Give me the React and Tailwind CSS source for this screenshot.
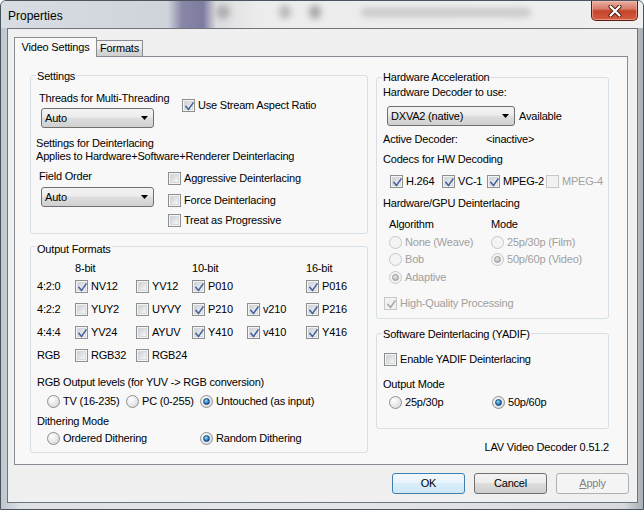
import React from 'react';

const T = "text-[11px] leading-[13px] tracking-[-0.2px]";

const Check = ({ checked, disabled }) => (
  <span
    className={`relative inline-flex h-[13px] w-[13px] shrink-0 items-center justify-center border ${
      disabled ? 'border-[#c5c8cb] bg-[#f4f4f4]' : 'border-[#8e8f8f] bg-[#f4f4f4]'
    }`}
  >
    <span
      className={`h-[9px] w-[9px] ${
        disabled ? 'bg-[#f1f1f1]' : 'bg-gradient-to-br from-[#cdd1d6] to-[#f7f7f7] border border-[#d6d9dc]'
      }`}
    />
    {checked && (
      <svg className="absolute left-[1px] top-[1px]" width="11" height="11" viewBox="0 0 11 11">
        <path
          d="M2 5.5 L4.5 8.5 L9 2"
          fill="none"
          stroke={disabled ? '#a8a8a8' : '#4a63a0'}
          strokeWidth="1.6"
          strokeLinecap="square"
        />
      </svg>
    )}
  </span>
);

const Radio = ({ checked, disabled }) => (
  <span
    className={`inline-flex h-[13px] w-[13px] shrink-0 items-center justify-center rounded-full border ${
      disabled
        ? 'border-[#c5c8cb] bg-[#f4f4f4]'
        : 'border-[#8e8f8f] bg-[radial-gradient(circle_at_35%_30%,#ffffff,#d0d3d7)]'
    }`}
  >
    {checked &&
      (disabled ? (
        <span className="h-[7px] w-[7px] rounded-full border border-[#9a9a9a] bg-[radial-gradient(circle_at_40%_35%,#e8e8e8,#a8a8a8)]" />
      ) : (
        <span className="h-[7px] w-[7px] rounded-full border border-[#1b4a78] bg-[radial-gradient(circle_at_40%_35%,#a6e2fa,#2a7cc0_55%,#0f3a66)]" />
      ))}
  </span>
);

const CheckRow = ({ checked, disabled, label, className = '' }) => (
  <div className={`flex items-center gap-[3px] ${className}`}>
    <Check checked={checked} disabled={disabled} />
    <span className={disabled ? 'text-[#a0a0a0]' : ''}>{label}</span>
  </div>
);

const RadioRow = ({ checked, disabled, label, className = '' }) => (
  <div className={`flex items-center gap-[3px] ${className}`}>
    <Radio checked={checked} disabled={disabled} />
    <span className={disabled ? 'text-[#a0a0a0]' : ''}>{label}</span>
  </div>
);

const Select = ({ value, className = '' }) => (
  <div
    className={`flex h-[20px] items-center justify-between rounded-[3px] border border-[#707070] bg-[linear-gradient(#f3f3f3,#ececec_45%,#dedede_50%,#d0d0d0)] pl-[3px] pr-[5px] ${className}`}
  >
    <span>{value}</span>
    <svg width="7" height="4" viewBox="0 0 7 4">
      <path d="M0 0 H7 L3.5 4 Z" fill="#000" />
    </svg>
  </div>
);

const Group = ({ label, className = '', labelTop = 'top-[-6px]', children }) => (
  <div className={`relative rounded-[3px] border border-[#d5dfe5] ${className}`}>
    <span className={`absolute left-[5px] bg-[#f8f8f8] px-[1px] ${labelTop}`}>{label}</span>
    {children}
  </div>
);

const formatRows = [
  ['4:2:0', ['NV12', true], ['YV12', false], ['P010', true], null, ['P016', true]],
  ['4:2:2', ['YUY2', false], ['UYVY', false], ['P210', true], ['v210', true], ['P216', true]],
  ['4:4:4', ['YV24', true], ['AYUV', false], ['Y410', true], ['v410', true], ['Y416', true]],
  ['RGB', ['RGB32', false], ['RGB24', false], null, null, null],
];

const Button = ({ children, kind }) => {
  const styles = {
    def: 'border-[#3c7fb1] bg-[linear-gradient(#f2f9fd,#e7f3fb_50%,#d8edf9_50%,#cfe7f6)] text-black',
    normal: 'border-[#707070] bg-[linear-gradient(#f3f3f3,#ececec_50%,#dddddd_50%,#cfcfcf)] text-black',
    disabled: 'border-[#adb2b5] bg-[#f4f4f4] text-[#838383]',
  };
  return (
    <div className={`flex h-[21px] w-[73px] items-center justify-center rounded-[3px] border ${styles[kind]}`}>
      {children}
    </div>
  );
};

export default function App() {
  return (
    <div
      className={`flex h-[510px] w-[644px] flex-col overflow-hidden rounded-t-[6px] border border-[#4b5560] bg-[linear-gradient(90deg,#bfc5cd,#dde1e6_3%,#e4e6ea_50%,#d6d9dd_97%,#a9afb6)] font-['Liberation_Sans',Arial,sans-serif] text-black ${T}`}
    >
      {/* title bar */}
      <div className="relative flex h-[27px] shrink-0 justify-between bg-[linear-gradient(90deg,#d8dde3_0%,#cfd3da_26%,#8887a8_28.2%,#7d7ca0_31.5%,#dcdcdf_33.5%,#ececec_40%,#efefef_100%)]">
        <span className="pointer-events-none absolute left-[215px] top-[4px] h-[14px] w-[14px] rounded-full bg-[#8e8e8e] opacity-60 blur-[3px]" />
        <span className="pointer-events-none absolute left-[278px] top-[4px] h-[14px] w-[12px] rounded-full bg-[#9a9a9a] opacity-60 blur-[3px]" />
        <span className="pointer-events-none absolute left-[308px] top-[4px] h-[14px] w-[12px] rounded-full bg-[#7c7c7c] opacity-60 blur-[3px]" />
        <span className="pointer-events-none absolute left-[360px] top-[7px] h-[9px] w-[170px] rounded-full bg-[#a5a5a5] opacity-50 blur-[3px]" />
        <span className="relative pl-[7px] pt-[8px] text-[12px] leading-[14px] tracking-normal">Properties</span>
        <div className="relative mr-[5px] flex h-[20px] w-[47px] items-center justify-center rounded-b-[5px] border border-t-0 border-[#5a1c12] bg-[linear-gradient(#eab0a3,#d87a66_42%,#c4452c_52%,#d45d40)] shadow-[inset_0_0_0_1px_rgba(255,200,190,0.5)]">
          <svg width="14" height="12" viewBox="0 0 14 12">
            <path d="M2.5 1.5 L11.5 10.5 M11.5 1.5 L2.5 10.5" stroke="#4a1a12" strokeWidth="4" strokeLinecap="round" />
            <path d="M2.5 1.5 L11.5 10.5 M11.5 1.5 L2.5 10.5" stroke="#ffffff" strokeWidth="2.2" strokeLinecap="round" />
          </svg>
        </div>
      </div>

      {/* client */}
      <div className="ml-[6px] h-[475px] w-[631px] border border-[#6e747b] bg-[#f0f0f0] pl-[6px] pt-[8px]">
        {/* tabs */}
        <div className="flex h-[19px] items-end">
          <div className="relative z-10 mb-[-1px] flex h-[20px] w-[83px] items-center justify-center border border-b-0 border-[#898c95] bg-[#f8f8f8] pb-[1px]">
            Video Settings
          </div>
          <div className="flex h-[16px] w-[46px] items-center justify-center border border-b-0 border-l-0 border-[#898c95] bg-[linear-gradient(#f2f2f2,#ebebeb_50%,#dddddd_50%,#cfcfcf)]">
            Formats
          </div>
        </div>

        {/* tab pane */}
        <div className="h-[409px] w-[614px] border border-[#898c95] bg-[#f8f8f8]">
          <div className="flex gap-[8px] pl-[15px] pt-[18px]">
            {/* left column */}
            <div className="w-[338px]">
              <Group label="Settings" className="h-[159px]">
                <div className="flex pl-[8px] pt-[16px]">
                  <div className="w-[143px]">
                    <div>Threads for Multi-Threading</div>
                    <Select value="Auto" className="ml-[2px] mt-[3px] w-[113px]" />
                  </div>
                  <CheckRow checked label="Use Stream Aspect Ratio" className="mt-[7px] h-[13px]" />
                </div>
                <div className="ml-[5px] mt-[9px]">Settings for Deinterlacing</div>
                <div className="ml-[5px]">Applies to Hardware+Software+Renderer Deinterlacing</div>
                <div className="mt-[7px] flex pl-[8px]">
                  <div className="w-[129px]">
                    <div>Field Order</div>
                    <Select value="Auto" className="ml-[2px] mt-[4px] w-[113px]" />
                  </div>
                  <div className="flex flex-col">
                    <CheckRow label="Aggressive Deinterlacing" className="mt-[2px]" />
                    <CheckRow label="Force Deinterlacing" className="mt-[9px]" />
                    <CheckRow label="Treat as Progressive" className="mt-[7px]" />
                  </div>
                </div>
              </Group>

              <Group label="Output Formats" labelTop="top-[-4px]" className="mt-[12px] h-[207px]">
                <div className="pl-[6px] pt-[15px]">
                  <div className="grid grid-cols-[38px_61px_56px_55px_59px_1fr]">
                    <span />
                    <span>8-bit</span>
                    <span />
                    <span>10-bit</span>
                    <span />
                    <span>16-bit</span>
                  </div>
                  {formatRows.map((row, i) => (
                    <div
                      key={row[0]}
                      className={`grid grid-cols-[38px_61px_56px_55px_59px_1fr] items-center ${i === 0 ? 'mt-[5px]' : 'mt-[10px]'}`}
                    >
                      <span>{row[0]}</span>
                      {row.slice(1).map((c, j) =>
                        c ? <CheckRow key={j} checked={c[1]} label={c[0]} /> : <span key={j} />
                      )}
                    </div>
                  ))}
                  <div className="mt-[14px]">RGB Output levels (for YUV -&gt; RGB conversion)</div>
                  <div className="mt-[6px] flex pl-[10px]">
                    <RadioRow label="TV (16-235)" className="w-[79px]" />
                    <RadioRow label="PC (0-255)" className="w-[74px]" />
                    <RadioRow checked label="Untouched (as input)" />
                  </div>
                  <div className="mt-[7px]">Dithering Mode</div>
                  <div className="mt-[4px] flex pl-[10px]">
                    <RadioRow label="Ordered Dithering" className="w-[153px]" />
                    <RadioRow checked label="Random Dithering" />
                  </div>
                </div>
              </Group>
            </div>

            {/* right column */}
            <div className="w-[233px] pt-[2px]">
              <Group label="Hardware Acceleration" labelTop="top-[-7px]" className="h-[242px]">
                <div className="ml-[6px] pt-[8px]">Hardware Decoder to use:</div>
                <div className="ml-[10px] mt-[7px] flex items-center gap-[4px]">
                  <Select value="DXVA2 (native)" className="w-[128px]" />
                  <span>Available</span>
                </div>
                <div className="ml-[6px] mt-[7px] flex">
                  <span className="w-[103px]">Active Decoder:</span>
                  <span>&lt;inactive&gt;</span>
                </div>
                <div className="ml-[6px] mt-[7px]">Codecs for HW Decoding</div>
                <div className="ml-[13px] mt-[9px] flex">
                  <CheckRow checked label="H.264" className="w-[52px]" />
                  <CheckRow checked label="VC-1" className="w-[45px]" />
                  <CheckRow checked label="MPEG-2" className="w-[59px]" />
                  <CheckRow disabled label="MPEG-4" />
                </div>
                <div className="ml-[6px] mt-[9px]">Hardware/GPU Deinterlacing</div>
                <div className="ml-[12px] mt-[8px] flex">
                  <div className="w-[102px]">
                    <div>Algorithm</div>
                    <RadioRow disabled label="None (Weave)" className="mt-[5px]" />
                    <RadioRow disabled label="Bob" className="mt-[4px]" />
                    <RadioRow disabled checked label="Adaptive" className="mt-[5px]" />
                  </div>
                  <div>
                    <div>Mode</div>
                    <RadioRow disabled label="25p/30p (Film)" className="mt-[5px]" />
                    <RadioRow disabled checked label="50p/60p (Video)" className="mt-[4px]" />
                  </div>
                </div>
                <CheckRow disabled checked label="High-Quality Processing" className="ml-[7px] mt-[13px]" />
              </Group>

              <Group label="Software Deinterlacing (YADIF)" className="mt-[14px] h-[96px]">
                <CheckRow label="Enable YADIF Deinterlacing" className="ml-[7px] pt-[19px]" />
                <div className="ml-[6px] mt-[12px]">Output Mode</div>
                <div className="ml-[12px] mt-[5px] flex">
                  <RadioRow label="25p/30p" className="w-[103px]" />
                  <RadioRow checked label="50p/60p" />
                </div>
              </Group>

              <div className="mt-[12px] text-right">LAV Video Decoder 0.51.2</div>
            </div>
          </div>
        </div>

        {/* buttons */}
        <div className="mt-[8px] flex w-[615px] justify-end gap-[9px]">
          <Button kind="def">OK</Button>
          <Button kind="normal">Cancel</Button>
          <Button kind="disabled">
            <span>
              <span className="underline">A</span>pply
            </span>
          </Button>
        </div>
      </div>
    </div>
  );
}
